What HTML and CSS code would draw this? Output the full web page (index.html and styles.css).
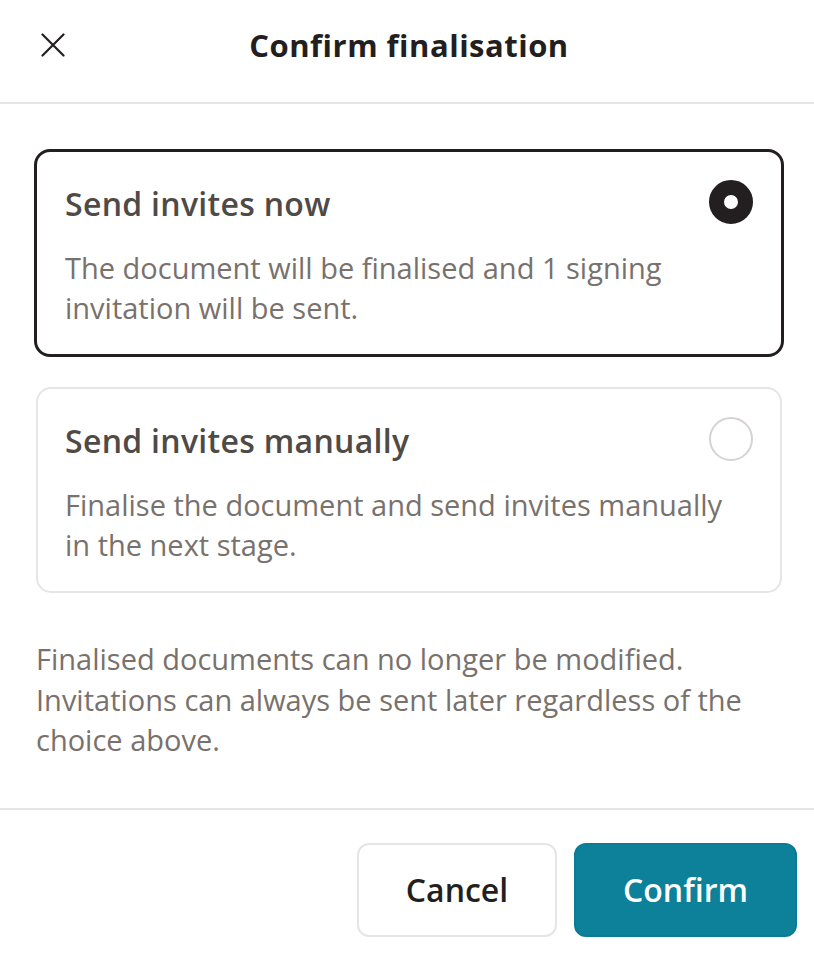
FILE: index.html
```html
<!DOCTYPE html>
<html lang="en">
<head>
<meta charset="utf-8">
<title>Confirm finalisation</title>
<link rel="stylesheet" href="styles.css">
</head>
<body>
<div class="dialog">
  <header class="header">
    <button class="close" aria-label="Close">
      <svg width="24" height="24" viewBox="0 0 24 24" aria-hidden="true">
        <path d="M1.5 1.5 L22.5 22.5 M22.5 1.5 L1.5 22.5" stroke="#231f20" stroke-width="2.2" stroke-linecap="round" fill="none"/>
      </svg>
    </button>
    <h1 class="title">Confirm finalisation</h1>
    <span class="spacer"></span>
  </header>

  <main class="body">
    <div class="option option-selected">
      <div class="option-head">
        <span class="option-title">Send invites now</span>
        <span class="radio radio-on"></span>
      </div>
      <p class="option-desc">The document will be finalised and 1 signing invitation will be sent.</p>
    </div>

    <div class="option">
      <div class="option-head">
        <span class="option-title">Send invites manually</span>
        <span class="radio"></span>
      </div>
      <p class="option-desc">Finalise the document and send invites manually in the next stage.</p>
    </div>

    <p class="note">Finalised documents can no longer be modified. Invitations can always be sent later regardless of the choice above.</p>
  </main>

  <footer class="footer">
    <button class="btn btn-secondary">Cancel</button>
    <button class="btn btn-primary">Confirm</button>
  </footer>
</div>
</body>
</html>
```

FILE: styles.css
```css
* {
  box-sizing: border-box;
}

html, body {
  margin: 0;
  padding: 0;
  background: #ffffff;
}

body {
  font-family: "Open Sans", "Noto Sans", sans-serif;
  color: #231f20;
}

.dialog {
  width: 814px;
  height: 962px;
  display: flex;
  flex-direction: column;
}

.header {
  height: 104px;
  border-bottom: 2px solid #e7e5e4;
  display: grid;
  grid-template-columns: 1fr auto 1fr;
  align-items: center;
  padding: 0 37px 12px 41px;
}

.close {
  width: 24px;
  height: 24px;
  padding: 0;
  margin: 0;
  border: 0;
  background: none;
  display: flex;
  cursor: pointer;
}

.title {
  margin: 0;
  font-size: 31px;
  font-weight: 700;
  line-height: 40px;
  letter-spacing: 0.5px;
  color: #231f20;
}

.body {
  padding: 45px 32px 47px 36px;
  display: flex;
  flex-direction: column;
}

.option {
  border: 2px solid #e7e5e4;
  border-radius: 15px;
  padding: 28px 27px 26px 27px;
  display: flex;
  flex-direction: column;
  gap: 24px;
  margin-bottom: 30px;
}

.option-selected {
  border: 3px solid #231f20;
  border-radius: 16px;
  margin: 0 -2px 30px -2px;
  padding: 28px 28px 26px 28px;
}

.option-head {
  height: 44px;
  display: flex;
  align-items: center;
  justify-content: space-between;
}

.option-title {
  font-size: 32px;
  font-weight: 600;
  line-height: 40px;
  letter-spacing: 0.3px;
  color: #4f4a46;
  padding-top: 4px;
}

.radio {
  width: 44px;
  height: 44px;
  border-radius: 50%;
  border: 2px solid #d6d3d1;
  flex: none;
}

.radio-on {
  border: 15px solid #231f20;
}

.option-desc {
  margin: 0;
  max-width: 672px;
  font-size: 29px;
  line-height: 40px;
  color: #78716c;
}

.note {
  margin: 16px 0 0 0;
  font-size: 29px;
  line-height: 40.5px;
  color: #78716c;
}

.footer {
  border-top: 2px solid #e7e5e4;
  flex: 1;
  display: flex;
  justify-content: flex-end;
  align-items: flex-start;
  gap: 17px;
  padding: 33px 17px 0 0;
}

.btn {
  height: 94px;
  border-radius: 12px;
  font-family: "Open Sans", "Noto Sans", sans-serif;
  font-size: 32px;
  font-weight: 600;
  padding: 0 46px;
  cursor: pointer;
}

.btn-secondary {
  width: 200px;
  background: #ffffff;
  border: 2px solid #e7e5e4;
  color: #231f20;
}

.btn-primary {
  width: 223px;
  background: #0c8199;
  border: 2px solid #0b7c93;
  color: #ffffff;
}
```
